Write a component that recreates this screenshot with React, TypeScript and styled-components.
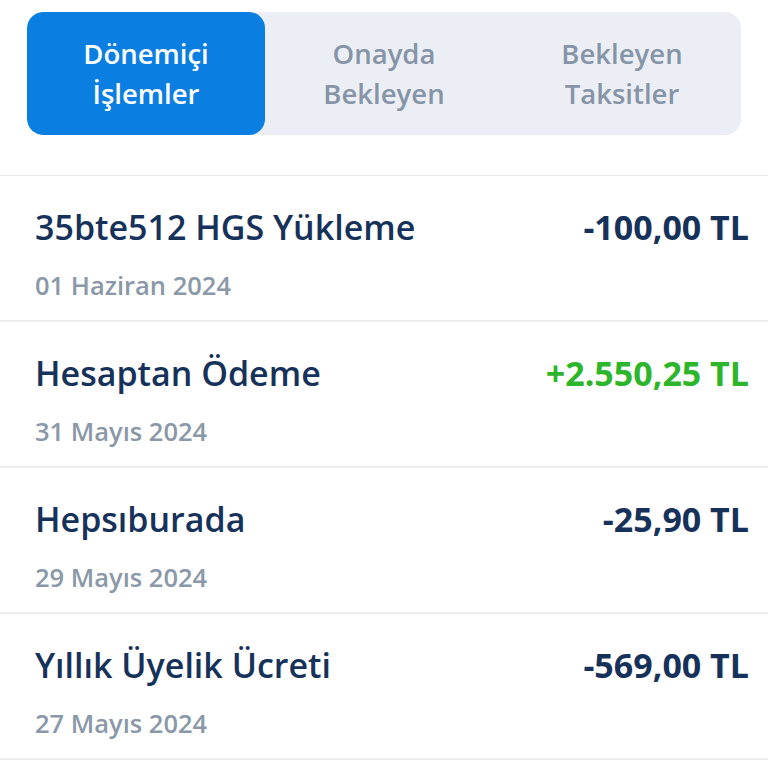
import styled, { createGlobalStyle } from "styled-components";

const GlobalStyle = createGlobalStyle`
    body {
        margin: 0;
        background: #ffffff;
        font-family: "Open Sans", "Noto Sans", sans-serif;
    }
`;

const Page = styled.div`
    width: 768px;
    background: #ffffff;
`;

const TabBar = styled.div`
    margin: 12px 27px 0 27px;
    height: 123px;
    display: grid;
    grid-template-columns: repeat(3, 1fr);
    background-color: #ebeff5;
    border-radius: 16px;
    overflow: hidden;
`;

const Tab = styled.div<{ $active?: boolean }>`
    display: flex;
    align-items: center;
    justify-content: center;
    text-align: center;
    font-size: 27.5px;
    line-height: 40px;
    font-weight: 600;
    color: ${(p) => (p.$active ? "#ffffff" : "#8594a6")};
    background-color: ${(p) => (p.$active ? "#0a7fe1" : "transparent")};
    border-radius: ${(p) => (p.$active ? "16px" : "0")};
`;

const List = styled.div`
    margin-top: 40px;
    border-top: 1px solid #ececec;
`;

const Row = styled.div`
    display: flex;
    justify-content: space-between;
    align-items: flex-start;
    padding: 31px 19px 19px 35px;
    border-bottom: 2px solid #ececec;
    height: 94px;
`;

const Info = styled.div`
    display: flex;
    flex-direction: column;
    gap: 22px;
`;

const Title = styled.div`
    font-size: 34px;
    line-height: 40px;
    font-weight: 600;
    color: #17325a;
`;

const DateText = styled.div`
    font-size: 25.5px;
    line-height: 32px;
    font-weight: 600;
    color: #8a98a8;
`;

const Amount = styled.div<{ $positive?: boolean }>`
    font-size: 34px;
    line-height: 40px;
    font-weight: 700;
    color: ${(p) => (p.$positive ? "#2db52b" : "#17325a")};
`;

const transactions = [
    { title: "35bte512 HGS Yükleme", date: "01 Haziran 2024", amount: "-100,00 TL" },
    { title: "Hesaptan Ödeme", date: "31 Mayıs 2024", amount: "+2.550,25 TL", positive: true },
    { title: "Hepsıburada", date: "29 Mayıs 2024", amount: "-25,90 TL" },
    { title: "Yıllık Üyelik Ücreti", date: "27 Mayıs 2024", amount: "-569,00 TL" },
];

export default function App() {
    return (
        <Page>
            <GlobalStyle />
            <TabBar>
                <Tab $active>Dönemiçi<br />İşlemler</Tab>
                <Tab>Onayda<br />Bekleyen</Tab>
                <Tab>Bekleyen<br />Taksitler</Tab>
            </TabBar>
            <List>
                {transactions.map((t) => (
                    <Row key={t.title}>
                        <Info>
                            <Title>{t.title}</Title>
                            <DateText>{t.date}</DateText>
                        </Info>
                        <Amount $positive={t.positive}>{t.amount}</Amount>
                    </Row>
                ))}
            </List>
        </Page>
    );
}
